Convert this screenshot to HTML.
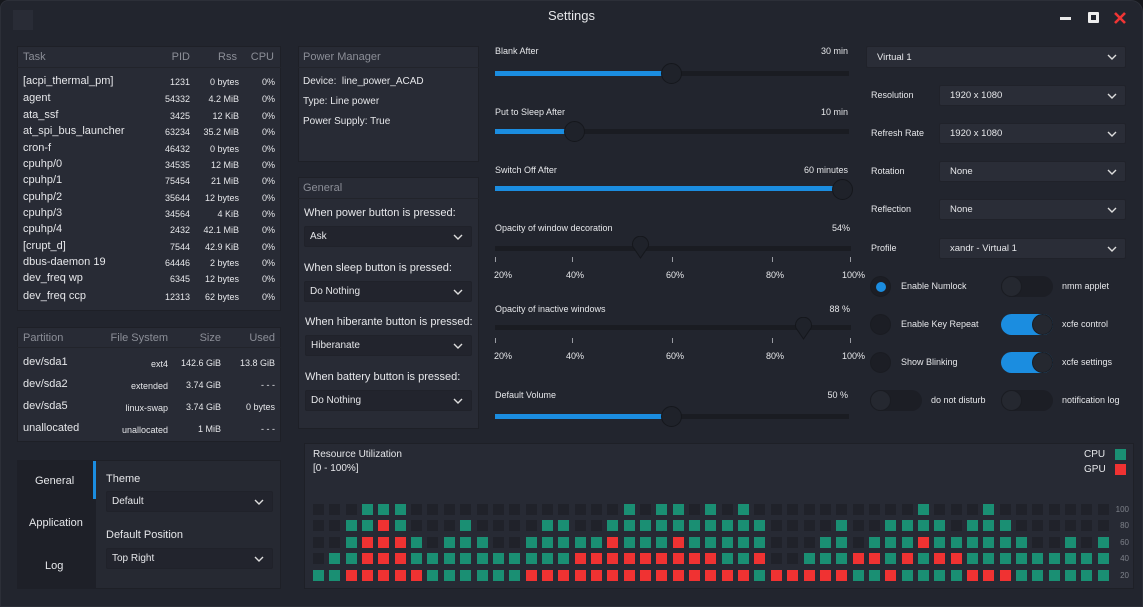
<!DOCTYPE html>
<html><head><meta charset="utf-8"><style>
*{box-sizing:border-box;margin:0;padding:0}
html,body{width:1143px;height:607px;background:#16181d;overflow:hidden}
body{font-family:"Liberation Sans",sans-serif;color:#e6e7ea;position:relative}
.win{position:absolute;left:0;top:0;width:1143px;height:607px;background:#22252e;border-radius:8px 12px 0 0;border:1px solid #2c2f38}
.a{position:absolute;white-space:nowrap}
.panel{position:absolute;background:#282b35;border:1px solid #1e2027}
.hd{color:#8b8e97;font-size:11px}
.s11{font-size:11px}.s9{font-size:9px}.s10{font-size:10px}
.r{text-align:right}
.dd{position:absolute;background:#2a2d37;border:1px solid #20222a;border-radius:2px;font-size:9.5px;padding-left:10px;display:flex;align-items:center}
.dd2{background:#22242d;font-size:10px;padding-left:5px}
.dd svg{position:absolute;right:8px;top:50%;margin-top:-3px}
.trk{position:absolute;height:5px;background:#1a1c22}
.fill{position:absolute;height:5px;background:#1b8de0}
.knob{position:absolute;width:21px;height:21px;border-radius:50%;background:#1f222a;border:1px solid #15171c}
.tick{position:absolute;width:1px;height:5px;background:#9a9ca3}
.sw{position:absolute;width:52px;height:21px;border-radius:11px;background:#1c1e25}
.sw.on{background:#1b8de0}
.sw i{position:absolute;top:0;width:21px;height:21px;border-radius:50%;background:#252830;border:1px solid #1a1c22}
.rad{position:absolute;width:21px;height:21px;border-radius:50%;background:#1c1e25;border:1px solid #1a1c22}
.sq{position:absolute;width:11px;height:11px}
</style></head><body>
<div class="win"></div>
<div class="a" style="left:13px;top:10px;width:20px;height:20px;background:#292c36"></div>
<div class="a" style="left:0;top:8px;width:1143px;text-align:center;font-size:13px">Settings</div>
<div class="a" style="left:1060px;top:17px;width:11px;height:3px;background:#e8e8e8"></div>
<div class="a" style="left:1088px;top:12px;width:11px;height:11px;border:3px solid #eee;border-radius:1px"></div>
<svg class="a" style="left:1114px;top:12px" width="12" height="12"><path d="M1 1L11 11M11 1L1 11" stroke="#f03535" stroke-width="2.6"/></svg>

<div class="panel" style="left:17px;top:46px;width:264px;height:265px"></div>
<div class="a" style="left:17px;top:67px;width:264px;height:1px;background:#22242b"></div>
<div class="a hd" style="left:23px;top:51px">Task</div>
<div class="a hd r" style="left:150px;top:51px;width:40px">PID</div>
<div class="a hd r" style="left:200px;top:51px;width:37px">Rss</div>
<div class="a hd r" style="left:245px;top:51px;width:29px">CPU</div>
<div id="tasks"></div>

<div class="panel" style="left:17px;top:327px;width:264px;height:115px"></div>
<div class="a" style="left:17px;top:347px;width:264px;height:1px;background:#22242b"></div>
<div class="a hd" style="left:23px;top:332px">Partition</div>
<div class="a hd r" style="left:100px;top:332px;width:68px">File System</div>
<div class="a hd r" style="left:180px;top:332px;width:41px">Size</div>
<div class="a hd r" style="left:230px;top:332px;width:45px">Used</div>
<div id="parts"></div>

<div class="a" style="left:17px;top:460px;width:264px;height:129px;background:#262932;border:1px solid #1e2027"></div>
<div class="a" style="left:17px;top:460px;width:79px;height:129px;background:#1e2028"></div>
<div class="a" style="left:93px;top:461px;width:3px;height:38px;background:#1b8de0"></div>
<div class="a s11" style="left:35px;top:475px">General</div>
<div class="a s11" style="left:29px;top:517px">Application</div>
<div class="a s11" style="left:45px;top:560px">Log</div>
<div class="a s11" style="left:106px;top:473px">Theme</div>
<div class="dd dd2" style="left:106px;top:491px;width:167px;height:21px">Default<svg width="10" height="6"><path d="M1 1L5 5L9 1" stroke="#ddd" stroke-width="1.4" fill="none"/></svg></div>
<div class="a s11" style="left:106px;top:529px">Default Position</div>
<div class="dd dd2" style="left:106px;top:548px;width:167px;height:21px">Top Right<svg width="10" height="6"><path d="M1 1L5 5L9 1" stroke="#ddd" stroke-width="1.4" fill="none"/></svg></div>

<div class="panel" style="left:298px;top:46px;width:181px;height:116px"></div>
<div class="a" style="left:298px;top:67px;width:181px;height:1px;background:#22242b"></div>
<div class="a hd" style="left:303px;top:51px">Power Manager</div>
<div class="a s10" style="left:303px;top:76px">Device:&nbsp; line_power_ACAD</div>
<div class="a s10" style="left:303px;top:96px">Type: Line power</div>
<div class="a s10" style="left:303px;top:116px">Power Supply: True</div>

<div class="panel" style="left:298px;top:177px;width:181px;height:252px"></div>
<div class="a" style="left:298px;top:198px;width:181px;height:1px;background:#22242b"></div>
<div class="a hd" style="left:303px;top:182px">General</div>
<div class="a s11" style="left:304px;top:207px">When power button is pressed:</div>
<div class="dd dd2" style="left:304px;top:226px;width:168px;height:21px">Ask<svg width="10" height="6"><path d="M1 1L5 5L9 1" stroke="#ddd" stroke-width="1.4" fill="none"/></svg></div>
<div class="a s11" style="left:304px;top:262px">When sleep button is pressed:</div>
<div class="dd dd2" style="left:304px;top:281px;width:168px;height:21px">Do Nothing<svg width="10" height="6"><path d="M1 1L5 5L9 1" stroke="#ddd" stroke-width="1.4" fill="none"/></svg></div>
<div class="a s11" style="left:305px;top:316px">When hiberante button is pressed:</div>
<div class="dd dd2" style="left:305px;top:335px;width:167px;height:21px">Hiberanate<svg width="10" height="6"><path d="M1 1L5 5L9 1" stroke="#ddd" stroke-width="1.4" fill="none"/></svg></div>
<div class="a s11" style="left:305px;top:371px">When battery button is pressed:</div>
<div class="dd dd2" style="left:305px;top:390px;width:167px;height:21px">Do Nothing<svg width="10" height="6"><path d="M1 1L5 5L9 1" stroke="#ddd" stroke-width="1.4" fill="none"/></svg></div>

<div class="a s9" style="left:495px;top:46px">Blank After</div><div class="a s9 r" style="left:760px;top:46px;width:88px">30 min</div>
<div class="trk" style="left:495px;top:71px;width:354px"></div><div class="fill" style="left:495px;top:71px;width:170px"></div><div class="knob" style="left:661px;top:63px"></div>
<div class="a s9" style="left:495px;top:107px">Put to Sleep After</div><div class="a s9 r" style="left:760px;top:107px;width:88px">10 min</div>
<div class="trk" style="left:495px;top:129px;width:354px"></div><div class="fill" style="left:495px;top:129px;width:72px"></div><div class="knob" style="left:564px;top:121px"></div>
<div class="a s9" style="left:495px;top:165px">Switch Off After</div><div class="a s9 r" style="left:760px;top:165px;width:88px">60 minutes</div>
<div class="trk" style="left:495px;top:186px;width:354px"></div><div class="fill" style="left:495px;top:186px;width:340px"></div><div class="knob" style="left:832px;top:179px"></div>
<div class="a s9" style="left:495px;top:223px">Opacity of window decoration</div><div class="a s9 r" style="left:760px;top:223px;width:90px">54%</div>
<div class="trk" style="left:495px;top:246px;width:356px"></div>
<svg class="a" style="left:631px;top:236px" width="19" height="24"><path d="M9.5 22L2 11A8 8 0 1 1 17 11Z" fill="#1f222a" stroke="#15171c"/></svg>
<div class="a s9 r" style="left:760px;top:304px;width:90px">88 %</div>
<div class="a s9" style="left:495px;top:304px">Opacity of inactive windows</div>
<div class="trk" style="left:495px;top:325px;width:356px"></div>
<svg class="a" style="left:794px;top:317px" width="19" height="24"><path d="M9.5 22L2 11A8 8 0 1 1 17 11Z" fill="#1f222a" stroke="#15171c"/></svg>
<div id="ticks"></div>
<div class="a s9" style="left:495px;top:390px">Default Volume</div><div class="a s9 r" style="left:760px;top:390px;width:88px">50 %</div>
<div class="trk" style="left:495px;top:414px;width:354px"></div><div class="fill" style="left:495px;top:414px;width:170px"></div><div class="knob" style="left:661px;top:406px"></div>

<div class="dd" style="left:866px;top:46px;width:260px;height:22px;padding-left:10px;font-size:9.5px">Virtual 1<svg width="10" height="6"><path d="M1 1L5 5L9 1" stroke="#ddd" stroke-width="1.4" fill="none"/></svg></div>
<div id="rset"></div>

<div class="rad" style="left:870px;top:276px"><div style="position:absolute;left:5px;top:5px;width:10px;height:10px;border-radius:50%;background:#1b8de0"></div></div>
<div class="rad" style="left:870px;top:314px"></div>
<div class="rad" style="left:870px;top:352px"></div>
<div class="a s9" style="left:901px;top:281px">Enable Numlock</div>
<div class="a s9" style="left:901px;top:319px">Enable Key Repeat</div>
<div class="a s9" style="left:901px;top:357px">Show Blinking</div>
<div class="sw" style="left:870px;top:390px"><i style="left:0"></i></div>
<div class="a s9" style="left:931px;top:395px">do not disturb</div>
<div class="sw" style="left:1001px;top:276px"><i style="left:0"></i></div>
<div class="sw on" style="left:1001px;top:314px"><i style="left:31px"></i></div>
<div class="sw on" style="left:1001px;top:352px"><i style="left:31px"></i></div>
<div class="sw" style="left:1001px;top:390px"><i style="left:0"></i></div>
<div class="a s9" style="left:1062px;top:281px">nmm applet</div>
<div class="a s9" style="left:1062px;top:319px">xcfe control</div>
<div class="a s9" style="left:1062px;top:357px">xcfe settings</div>
<div class="a s9" style="left:1062px;top:395px">notification log</div>

<div class="panel" style="left:304px;top:443px;width:830px;height:146px;background:#272a34"></div>
<div class="a s10" style="left:313px;top:449px">Resource Utilization</div>
<div class="a s10" style="left:313px;top:463px">[0 - 100%]</div>
<div class="a s10" style="left:1084px;top:449px">CPU</div>
<div class="a s10" style="left:1084px;top:464px">GPU</div>
<div class="sq" style="left:1115px;top:449px;background:#1a8f73"></div>
<div class="sq" style="left:1115px;top:464px;background:#f03232"></div>
<div id="grid"></div>

<script>
function h(id,s){document.getElementById(id).innerHTML=s;}
var t=[["[acpi_thermal_pm]","1231","0 bytes"],["agent","54332","4.2 MiB"],["ata_ssf","3425","12 KiB"],["at_spi_bus_launcher","63234","35.2 MiB"],["cron-f","46432","0 bytes"],["cpuhp/0","34535","12 MiB"],["cpuhp/1","75454","21 MiB"],["cpuhp/2","35644","12 bytes"],["cpuhp/3","34564","4 KiB"],["cpuhp/4","2432","42.1 MiB"],["[crupt_d]","7544","42.9 KiB"],["dbus-daemon 19","64446","2 bytes"],["dev_freq wp","6345","12 bytes"],["dev_freq ccp","12313","62 bytes"]];
var ys=[75,92,109,125,142,158,174,191,207,223,240,256,272,290],s="";
t.forEach(function(r,i){var y=ys[i];s+='<div class="a s11" style="left:23px;top:'+y+'px">'+r[0]+'</div><div class="a s9 r" style="left:140px;top:'+(y+2)+'px;width:50px">'+r[1]+'</div><div class="a s9 r" style="left:190px;top:'+(y+2)+'px;width:49px">'+r[2]+'</div><div class="a s9 r" style="left:245px;top:'+(y+2)+'px;width:30px">0%</div>';});
h("tasks",s);
var p=[["dev/sda1","ext4","142.6 GiB","13.8 GiB"],["dev/sda2","extended","3.74 GiB","- - -"],["dev/sda5","linux-swap","3.74 GiB","0 bytes"],["unallocated","unallocated","1 MiB","- - -"]];s="";
p.forEach(function(r,i){var y=356+i*22;s+='<div class="a s11" style="left:23px;top:'+y+'px">'+r[0]+'</div><div class="a s9 r" style="left:90px;top:'+(y+3)+'px;width:78px">'+r[1]+'</div><div class="a s9 r" style="left:170px;top:'+(y+2)+'px;width:51px">'+r[2]+'</div><div class="a s9 r" style="left:220px;top:'+(y+2)+'px;width:55px">'+r[3]+'</div>';});
h("parts",s);
s="";[[257,270],[338,351]].forEach(function(v){[[495,"20%"],[572,"40%"],[672,"60%"],[772,"80%"],[850,"100%"]].forEach(function(k,j){s+='<div class="tick" style="left:'+k[0]+'px;top:'+v[0]+'px"></div><div class="a s9" style="left:'+(k[0]-(j==4?8:(j==0?1:6)))+'px;top:'+v[1]+'px">'+k[1]+'</div>';});});
h("ticks",s);
s="";[["Resolution","1920 x 1080",85],["Refresh Rate","1920 x 1080",123],["Rotation","None",161],["Reflection","None",199],["Profile","xandr - Virtual 1",238]].forEach(function(r){s+='<div class="a s9" style="left:871px;top:'+(r[2]+5)+'px">'+r[0]+'</div><div class="dd" style="left:939px;top:'+r[2]+'px;width:187px;height:21px">'+r[1]+'<svg width="10" height="6"><path d="M1 1L5 5L9 1" stroke="#ddd" stroke-width="1.4" fill="none"/></svg></div>';});
h("rset",s);
function row(spec){var a=[];for(var i=0;i<49;i++)a.push('.');spec.forEach(function(x){for(var i=x[0];i<=x[1];i++)a[i]=x[2];});return a;}
var rows=[
row([[3,5,'G'],[19,19,'G'],[21,22,'G'],[24,24,'G'],[26,26,'G'],[37,37,'G'],[41,41,'G']]),
row([[2,3,'G'],[4,4,'R'],[5,5,'G'],[9,9,'G'],[14,15,'G'],[18,27,'G'],[32,32,'G'],[35,38,'G'],[40,42,'G']]),
row([[2,2,'G'],[3,5,'R'],[6,6,'G'],[8,10,'G'],[13,17,'G'],[18,18,'R'],[19,21,'G'],[22,22,'R'],[23,27,'G'],[31,32,'G'],[34,36,'G'],[37,37,'R'],[38,43,'G'],[46,46,'G'],[48,48,'G']]),
row([[1,2,'G'],[3,5,'R'],[6,15,'G'],[16,24,'R'],[25,26,'G'],[27,27,'R'],[30,32,'G'],[33,34,'R'],[35,35,'G'],[36,36,'R'],[37,37,'G'],[38,39,'R'],[40,48,'G']]),
row([[0,1,'G'],[2,6,'R'],[7,12,'G'],[13,26,'R'],[27,27,'G'],[28,32,'R'],[33,34,'G'],[35,35,'R'],[36,39,'G'],[40,42,'R'],[43,48,'G']])];
var ry=[504,520,537,553,570],lb=["100","80","60","40","20"],col={'.':'#20222a','G':'#1a8f73','R':'#f03232'};s="";
rows.forEach(function(r,j){r.forEach(function(c,i){s+='<div class="sq" style="left:'+Math.round(313+i*16.35)+'px;top:'+ry[j]+'px;background:'+col[c]+'"></div>';});s+='<div class="a" style="left:1110px;top:'+(ry[j]+1)+'px;width:19px;text-align:right;font-size:8px;color:#7d8089">'+lb[j]+'</div>';});
h("grid",s);
</script>
</body></html>
